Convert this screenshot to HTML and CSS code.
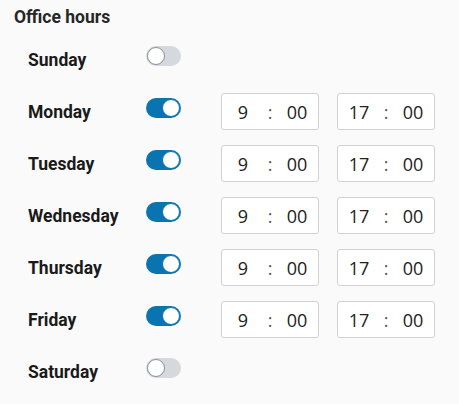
FILE: index.html
```html
<!DOCTYPE html>
<html>
<head>
<meta charset="utf-8">
<link rel="stylesheet" href="styles.css">
</head>
<body>
<div class="panel">
  <h2 class="title">Office hours</h2>
  <div class="days">
    <div class="row">
      <span class="day">Sunday</span>
      <span class="toggle"><span class="knob"></span></span>
    </div>
    <div class="row">
      <span class="day">Monday</span>
      <span class="toggle on"><span class="knob"></span></span>
      <div class="time"><span class="field">9</span><span class="colon">:</span><span class="field">00</span></div>
      <div class="time"><span class="field">17</span><span class="colon">:</span><span class="field">00</span></div>
    </div>
    <div class="row">
      <span class="day">Tuesday</span>
      <span class="toggle on"><span class="knob"></span></span>
      <div class="time"><span class="field">9</span><span class="colon">:</span><span class="field">00</span></div>
      <div class="time"><span class="field">17</span><span class="colon">:</span><span class="field">00</span></div>
    </div>
    <div class="row">
      <span class="day">Wednesday</span>
      <span class="toggle on"><span class="knob"></span></span>
      <div class="time"><span class="field">9</span><span class="colon">:</span><span class="field">00</span></div>
      <div class="time"><span class="field">17</span><span class="colon">:</span><span class="field">00</span></div>
    </div>
    <div class="row">
      <span class="day">Thursday</span>
      <span class="toggle on"><span class="knob"></span></span>
      <div class="time"><span class="field">9</span><span class="colon">:</span><span class="field">00</span></div>
      <div class="time"><span class="field">17</span><span class="colon">:</span><span class="field">00</span></div>
    </div>
    <div class="row">
      <span class="day">Friday</span>
      <span class="toggle on"><span class="knob"></span></span>
      <div class="time"><span class="field">9</span><span class="colon">:</span><span class="field">00</span></div>
      <div class="time"><span class="field">17</span><span class="colon">:</span><span class="field">00</span></div>
    </div>
    <div class="row">
      <span class="day">Saturday</span>
      <span class="toggle"><span class="knob"></span></span>
    </div>
  </div>
</div>
</body>
</html>
```
FILE: styles.css
```css
html, body {
  margin: 0;
  padding: 0;
  background: #fafafa;
}
.panel {
  padding: 7px 0 0 14px;
  font-family: Roboto, "Liberation Sans", sans-serif;
  color: #222;
}
.title {
  margin: 0;
  font-size: 17.5px;
  line-height: 20px;
  font-weight: 700;
  color: #262626;
}
.days {
  margin-top: 14px;
  padding-left: 14px;
  display: flex;
  flex-direction: column;
  gap: 15px;
}
.row {
  display: flex;
  align-items: center;
  min-height: 37px;
}
.day {
  width: 118px;
  font-size: 17.5px;
  font-weight: 700;
  color: #1a1a1a;
}
.toggle {
  align-self: flex-start;
  margin-top: 5px;
  width: 35px;
  height: 20px;
  border-radius: 10px;
  background: #d5d9de;
  display: flex;
  align-items: center;
  padding: 0 1px;
  box-sizing: border-box;
}
.knob {
  width: 18px;
  height: 18px;
  box-sizing: border-box;
  border-radius: 50%;
  background: #fff;
  border: 1px solid #8c9096;
}
.toggle.on {
  background: #0a74b0;
  justify-content: flex-end;
}
.toggle.on .knob {
  border-color: #0a74b0;
}
.time {
  margin-left: 40px;
  width: 98px;
  height: 37px;
  box-sizing: border-box;
  border: 1px solid #d2d2d2;
  border-radius: 3px;
  background: #fff;
  display: flex;
  align-items: center;
  font-family: "Open Sans", sans-serif;
  font-size: 18px;
  color: #222;
}
.time + .time {
  margin-left: 18px;
}
.field {
  width: 42px;
  text-align: center;
}
.colon {
  width: 12px;
  text-align: center;
  color: #555;
}
```
